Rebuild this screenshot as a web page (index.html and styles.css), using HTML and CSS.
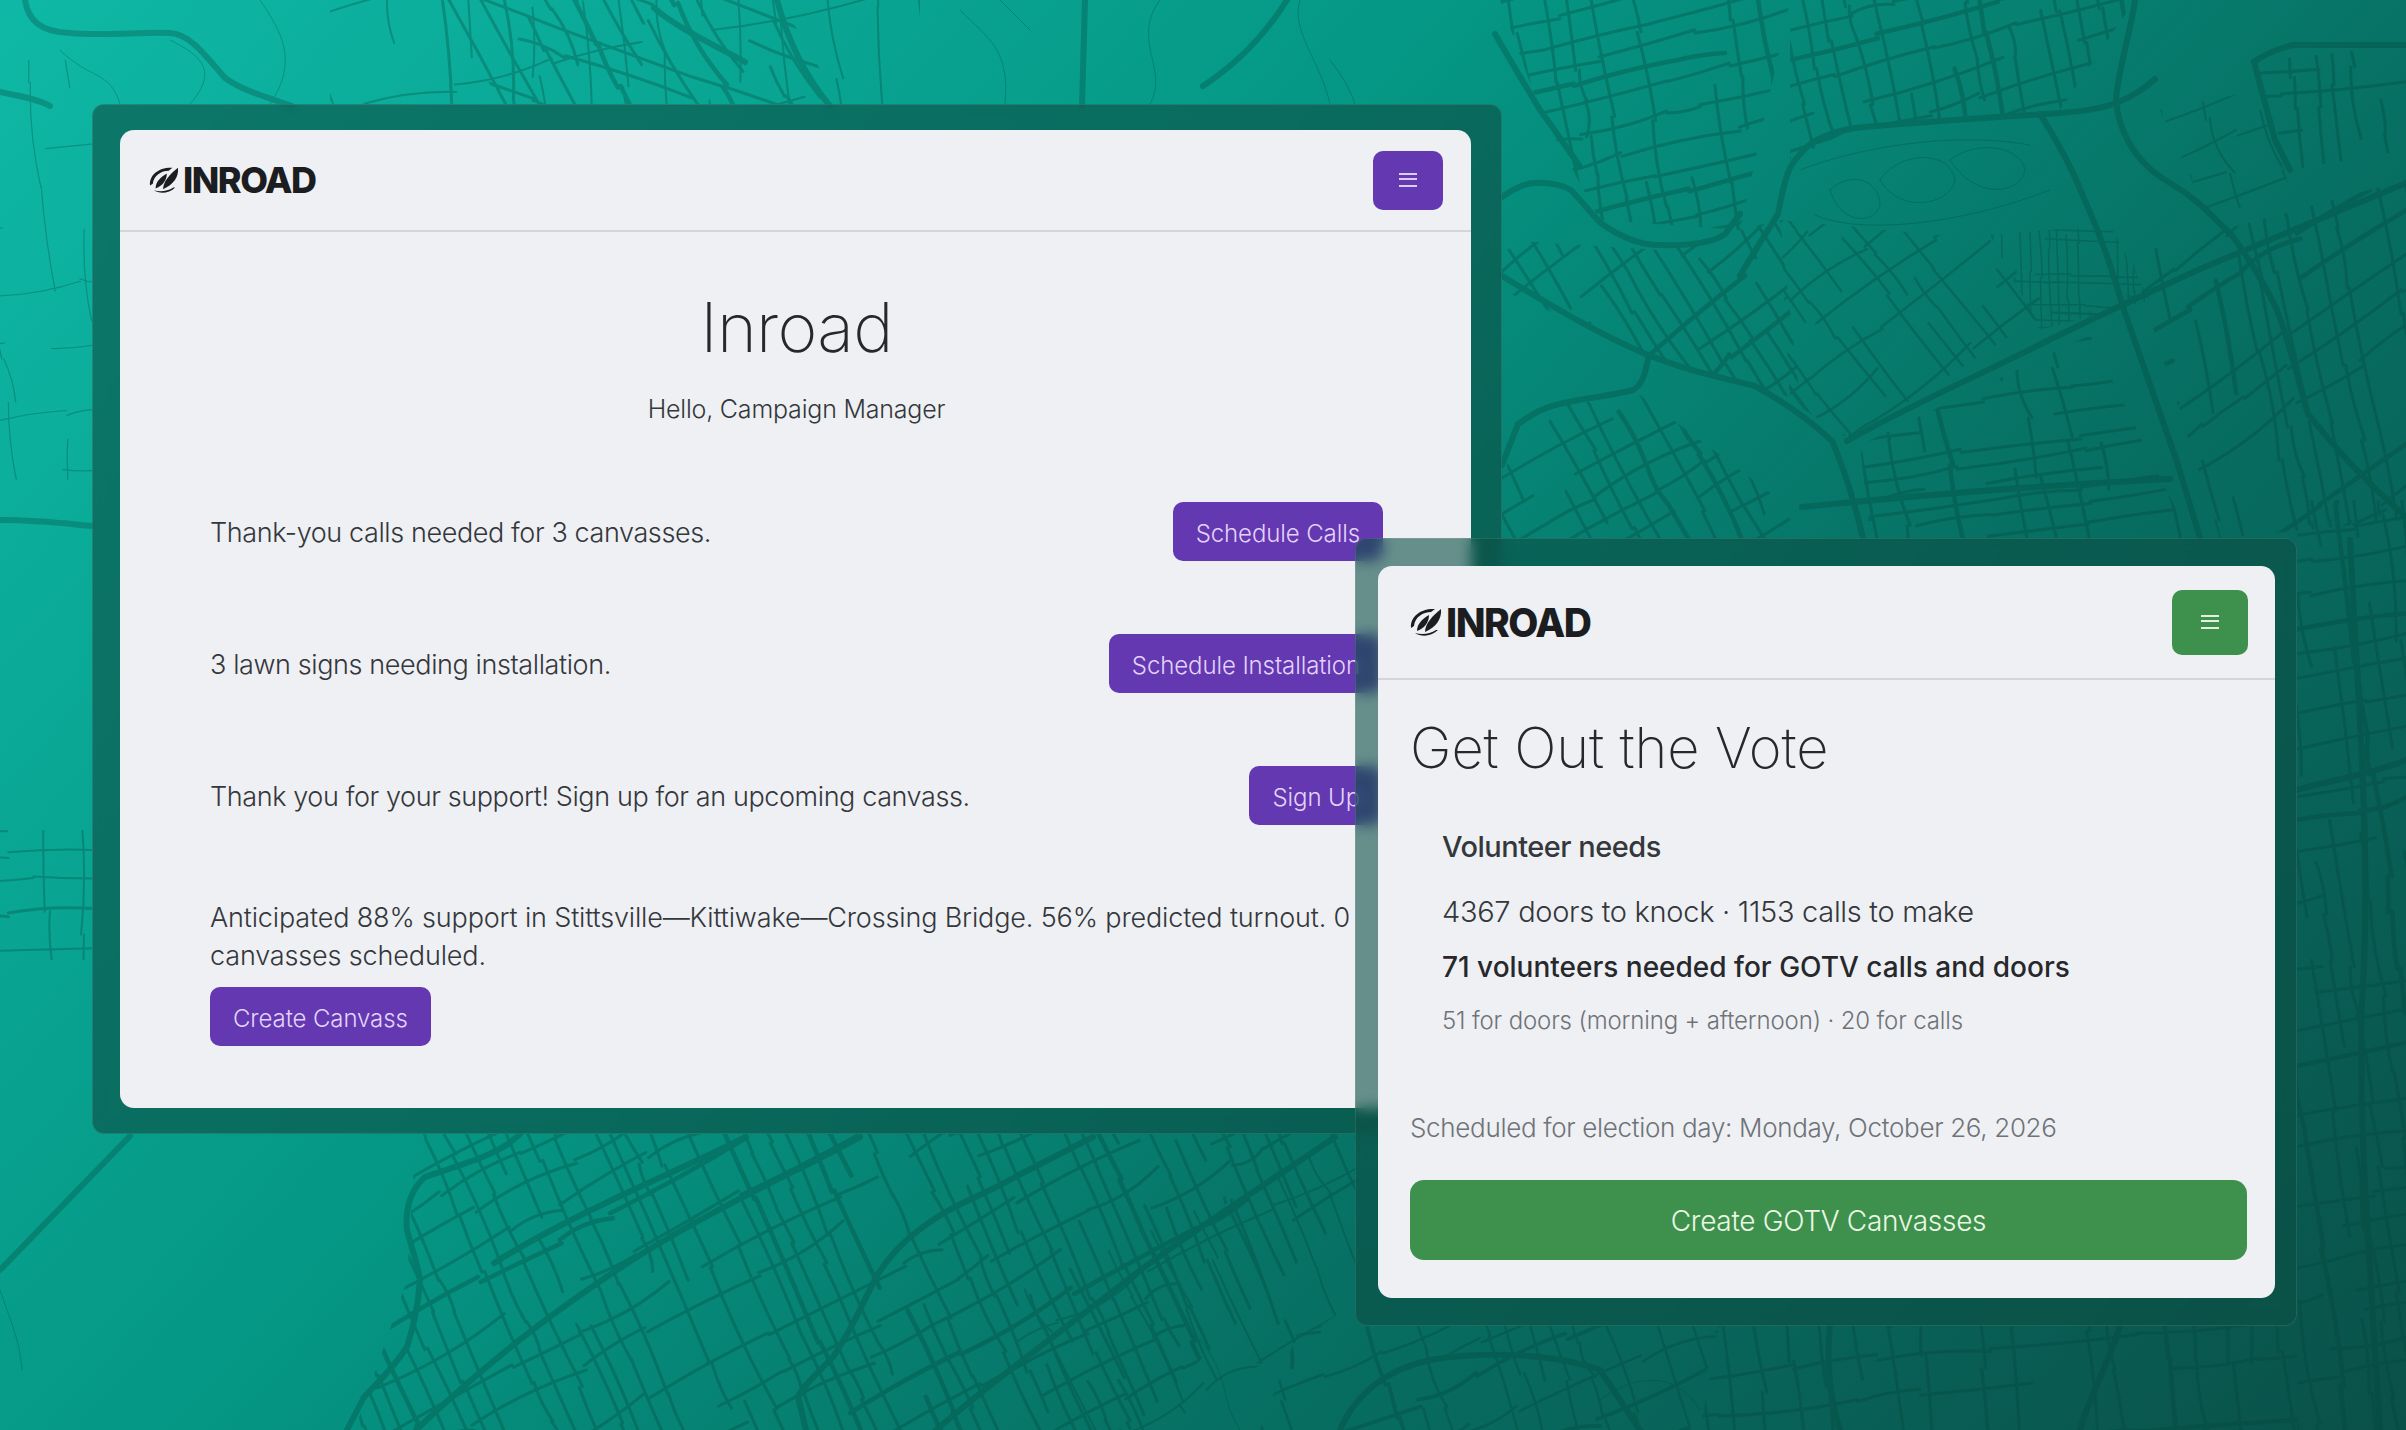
FILE: index.html
```html
<!DOCTYPE html>
<html lang="en">

<head>
    <meta charset="UTF-8">
    <title>Inroad</title>
    <link rel="stylesheet" href="styles.css">
</head>

<body>
    <svg id="map" class="map" viewBox="0 0 2406 1430" xmlns="http://www.w3.org/2000/svg"></svg>

    <div class="frame frame-main">
        <div class="card">
            <div class="navbar">
                <div class="brand">
                    <svg class="brand-mark" viewBox="0 0 32 30">
                        <path d="M1 21C0 10 10 2 23 2L25 2L21 5C13 5 5 10 4 19Z"/>
                        <path d="M7 24C7 17 12 12 19 8C19 15 15 21 7 24Z"/>
                        <path d="M15 25C15 17 22 9 31 2C32 12 26 20 15 25Z"/>
                        <path d="M5 26C11 30 21 30 28 23L26 23C20 27 12 28 5 26Z"/>
                    </svg>
                    <span>INROAD</span>
                </div>
                <button class="menu-btn purple"><span class="burger"></span></button>
            </div>
            <div class="main-body">
                <h1 class="main-title">Inroad</h1>
                <p class="hello">Hello, Campaign Manager</p>
                <div class="row row-first">
                    <span>Thank-you calls needed for 3 canvasses.</span>
                    <button class="btn purple">Schedule Calls</button>
                </div>
                <div class="row">
                    <span>3 lawn signs needing installation.</span>
                    <button class="btn purple">Schedule Installation</button>
                </div>
                <div class="row">
                    <span>Thank you for your support! Sign up for an upcoming canvass.</span>
                    <button class="btn purple">Sign Up</button>
                </div>
                <p class="support">Anticipated 88% support in Stittsville—Kittiwake—Crossing Bridge. 56% predicted turnout. 0 canvasses scheduled.</p>
                <button class="btn purple">Create Canvass</button>
            </div>
        </div>
    </div>

    <div class="frame frame-gotv">
        <div class="card">
            <div class="navbar navbar-gotv">
                <div class="brand brand-gotv">
                    <svg class="brand-mark" viewBox="0 0 32 30">
                        <path d="M1 21C0 10 10 2 23 2L25 2L21 5C13 5 5 10 4 19Z"/>
                        <path d="M7 24C7 17 12 12 19 8C19 15 15 21 7 24Z"/>
                        <path d="M15 25C15 17 22 9 31 2C32 12 26 20 15 25Z"/>
                        <path d="M5 26C11 30 21 30 28 23L26 23C20 27 12 28 5 26Z"/>
                    </svg>
                    <span>INROAD</span>
                </div>
                <button class="menu-btn menu-btn-gotv green"><span class="burger"></span></button>
            </div>
            <div class="gotv-body">
                <h2 class="gotv-title">Get Out the Vote</h2>
                <div class="needs">
                    <p class="needs-head">Volunteer needs</p>
                    <p class="needs-counts">4367 doors to knock · 1153 calls to make</p>
                    <p class="needs-total">71 volunteers needed for GOTV calls and doors</p>
                    <p class="needs-split">51 for doors (morning + afternoon) · 20 for calls</p>
                </div>
                <p class="scheduled">Scheduled for election day: Monday, October 26, 2026</p>
                <button class="btn-wide green">Create GOTV Canvasses</button>
            </div>
        </div>
    </div>

    <script src="map.js"></script>
</body>
</html>
```
FILE: styles.css
```css
body {
    margin: 0;
    width: 2406px;
    height: 1430px;
    position: relative;
    overflow: hidden;
    font-family: Inter, "Noto Sans", sans-serif;
    font-weight: 300;
    color: #34373b;
    background: linear-gradient(132deg, #0fb8a6 0%, #059684 40%, #076f63 68%, #0a5149 100%);
}

p,
h1,
h2 {
    margin: 0;
}

button {
    font-family: inherit;
    border: none;
    cursor: pointer;
}

.map {
    position: absolute;
    left: 0;
    top: 0;
    width: 2406px;
    height: 1430px;
}

/* glass frames round the two app windows */
.frame {
    position: absolute;
    box-sizing: border-box;
    border: 1px solid rgba(255, 255, 255, 0.1);
    border-radius: 12px;
    background-color: rgba(11, 78, 68, 0.6);
    -webkit-backdrop-filter: blur(7px);
    backdrop-filter: blur(7px);
}

.frame-main {
    left: 92px;
    top: 104px;
    width: 1410px;
    height: 1030px;
    padding: 25px 30px 25px 27px;
}

.frame-gotv {
    left: 1355px;
    top: 538px;
    width: 942px;
    height: 788px;
    padding: 27px 21px 27px 22px;
}

.card {
    height: 100%;
    box-sizing: border-box;
    background-color: #eef0f4;
    border-radius: 14px;
    overflow: hidden;
}

.navbar {
    height: 102px;
    box-sizing: border-box;
    border-bottom: 2px solid #d3d5d9;
    padding: 0 28px 0 29px;
    display: flex;
    align-items: center;
    justify-content: space-between;
}

.navbar-gotv {
    height: 114px;
    padding: 0 27px 0 32px;
}

.brand {
    display: flex;
    align-items: center;
    gap: 4px;
    font-weight: 800;
    font-size: 36px;
    letter-spacing: -1.5px;
    color: #1c1d20;
}

.brand-gotv {
    font-size: 39px;
}

.brand-mark {
    width: 30px;
    height: 28px;
    fill: #1c1d20;
}

.brand-gotv .brand-mark {
    width: 32px;
    height: 30px;
}

.menu-btn {
    width: 70px;
    height: 59px;
    border-radius: 10px;
    display: flex;
    align-items: center;
    justify-content: center;
}

.menu-btn-gotv {
    width: 76px;
    height: 65px;
}

.burger {
    display: block;
    width: 18px;
    height: 14px;
    box-sizing: border-box;
    border-top: 2px solid #dccdf6;
    border-bottom: 2px solid #dccdf6;
    position: relative;
}

.burger::after {
    content: "";
    position: absolute;
    left: 0;
    right: 0;
    top: 3px;
    height: 2px;
    background-color: #dccdf6;
}

.green .burger {
    border-color: #e2f0dd;
}

.green .burger::after {
    background-color: #e2f0dd;
}

.purple {
    background-color: #6338b0;
    color: #e2d3fa;
}

.green {
    background-color: #3d914c;
    color: #ecf6e6;
}

.main-body {
    padding: 0 88px 0 90px;
}

.main-title {
    margin-top: 57px;
    text-align: center;
    font-size: 68px;
    line-height: 76px;
    font-weight: 250;
    letter-spacing: -0.7px;
    color: #26282c;
}

.hello {
    margin-top: 27px;
    text-align: center;
    font-size: 25px;
    line-height: 34px;
    letter-spacing: -0.2px;
}

.row {
    display: flex;
    align-items: center;
    justify-content: space-between;
    margin-top: 73px;
    font-size: 27px;
    letter-spacing: -0.4px;
}

.row span {
    padding-top: 2px;
}

.row-first {
    margin-top: 76px;
}

.btn {
    height: 59px;
    padding: 3px 23px 0;
    border-radius: 10px;
    font-size: 24px;
    font-weight: 300;
    letter-spacing: -0.1px;
    white-space: nowrap;
}

.support {
    margin-top: 74px;
    margin-bottom: 12px;
    font-size: 27px;
    line-height: 38px;
    letter-spacing: -0.15px;
}

.gotv-body {
    padding: 0 28px 0 32px;
}

.gotv-title {
    margin-top: 35px;
    font-size: 56px;
    line-height: 66px;
    font-weight: 250;
    letter-spacing: -0.1px;
    color: #26282c;
}

.needs {
    margin-top: 47px;
    padding-left: 32px;
}

.needs-head {
    font-size: 29px;
    line-height: 38px;
    font-weight: 500;
    letter-spacing: -0.5px;
}

.needs-counts {
    margin-top: 27px;
    font-size: 29px;
    line-height: 38px;
    letter-spacing: -0.3px;
}

.needs-total {
    margin-top: 17px;
    font-size: 28px;
    line-height: 38px;
    font-weight: 500;
    color: #26282c;
}

.needs-split {
    margin-top: 16px;
    font-size: 24px;
    line-height: 38px;
    letter-spacing: -0.15px;
    color: #6f7378;
}

.scheduled {
    margin-top: 69px;
    font-size: 26px;
    line-height: 38px;
    letter-spacing: -0.32px;
    color: #6f7378;
}

.btn-wide {
    display: block;
    width: 100%;
    height: 80px;
    margin-top: 33px;
    padding-top: 2px;
    border-radius: 14px;
    font-size: 28px;
    font-weight: 300;
    letter-spacing: -0.3px;
}
```
FILE: map.js
```js
// street map behind the windows: traced main roads plus generated blocks
var SVG_NS = 'http://www.w3.org/2000/svg';
var map = document.getElementById('map');
var seed = 211;

function rand() {
    seed = (seed * 1664525 + 1013904223) % 4294967296;
    return seed / 4294967296;
}

function addPath(parent, d, width) {
    var p = document.createElementNS(SVG_NS, 'path');
    p.setAttribute('d', d);
    p.setAttribute('stroke-width', width);
    parent.appendChild(p);
}

// poly, angle of long streets, spacing, angle of cross streets, spacing, width
var districts = [
    [[[330,0],[920,0],[920,104],[330,104]], 84, 40, -12, 40, 2],
    [[[446,0],[780,0],[840,104],[500,104]], 62, 28, 20, 24, 3],
    [[[1500,0],[1790,0],[1740,230],[1600,220],[1540,110]], 80, 24, -14, 26, 3],
    [[[1790,0],[2135,0],[2060,110],[1855,128],[1790,160]], 78, 20, -16, 26, 3],
    [[[1502,240],[1660,250],[1780,220],[1800,400],[1660,360],[1502,290]], 58, 18, -38, 34, 3],
    [[[1780,220],[1990,240],[2050,310],[1850,440],[1790,400]], 52, 16, -36, 32, 2.5],
    [[[1990,235],[2110,225],[2150,300],[2040,330]], 88, 9, 2, 9, 1.5],
    [[[1860,445],[2090,335],[2190,538],[1870,538]], 78, 28, -8, 20, 3],
    [[[2130,255],[2406,180],[2406,520],[2220,538]], 78, 22, -34, 34, 3],
    [[[2254,62],[2406,45],[2406,150],[2290,170]], 84, 22, -6, 28, 3],
    [[[2160,110],[2260,90],[2290,190],[2210,220]], 70, 40, -20, 36, 2],
    [[[1502,470],[1564,405],[1640,395],[1780,500],[1800,538],[1502,538]], 62, 22, -30, 32, 3],
    [[[2297,500],[2406,500],[2406,1430],[2297,1430]], 82, 24, -10, 28, 3],
    [[[416,1134],[1360,1134],[1360,1200],[1130,1430],[355,1430],[407,1280]], 66, 18, -28, 36, 3],
    [[[1000,1300],[1360,1134],[1360,1300],[1160,1430],[1050,1430]], 66, 40, -28, 60, 2],
    [[[1300,1326],[1720,1326],[1690,1430],[1260,1430]], 72, 26, -22, 38, 2.5],
    [[[1720,1326],[2297,1326],[2297,1430],[1700,1430]], 84, 30, -6, 30, 3],
    [[[0,60],[92,60],[92,480],[0,480]], 84, 38, -8, 60, 1.2],
    [[[0,830],[92,830],[92,960],[0,960]], 88, 30, -2, 34, 2]
];

// traced arterial roads
var mainRoads = [
    'M25 0C28 20 40 32 70 33C100 36 140 32 170 33C190 34 205 55 225 78C245 92 270 98 292 106',
    'M777 0C785 30 800 70 830 106',
    'M654 8C680 30 715 45 745 62',
    'M1085 0L1082 106',
    'M0 92C20 96 40 100 50 106',
    'M0 520C40 520 70 524 92 526',
    'M130 1136L0 1270',
    'M520 1134C500 1155 460 1165 425 1177C410 1190 405 1210 407 1230C412 1250 418 1265 420 1280C418 1310 412 1330 407 1347C392 1370 375 1385 364 1397L347 1430',
    'M876 1277C890 1255 905 1240 919 1230C950 1205 985 1195 1015 1177L1093 1137M876 1277C860 1310 848 1335 833 1357C815 1375 800 1390 798 1397L806 1430',
    'M936 1430C1000 1375 1070 1325 1127 1280C1200 1225 1280 1175 1335 1137',
    'M494 1263C570 1215 670 1175 746 1137',
    'M416 1430C500 1350 570 1300 640 1255C720 1205 800 1170 860 1137',
    'M2135 0C2130 35 2118 70 2116 100C2118 125 2130 160 2170 183C2200 200 2215 220 2231 234C2250 260 2265 285 2277 310C2295 360 2300 390 2308 414C2340 455 2375 490 2406 517',
    'M2040 114C2060 145 2075 175 2086 203C2105 245 2115 280 2124 310C2145 370 2162 420 2178 465L2200 538',
    'M1855 128C1920 122 1985 118 2047 114C2075 112 2098 110 2116 103C2130 98 2145 88 2155 79M1855 128C1830 132 1812 140 1802 152C1792 162 1788 170 1786 179C1781 195 1780 205 1778 214C1765 235 1752 255 1740 276',
    'M1502 276C1550 305 1600 335 1648 355C1690 372 1725 378 1755 386C1790 405 1815 425 1832 441C1845 470 1855 505 1863 538',
    'M1847 441C1910 405 1980 375 2047 341C2100 315 2150 292 2200 269C2270 240 2340 210 2406 183',
    'M1802 507C1920 495 2050 485 2170 479',
    'M1648 359C1645 375 1642 385 1633 390C1610 396 1585 398 1564 403C1540 408 1530 416 1518 424L1502 465',
    'M1502 197C1512 190 1522 184 1533 183C1550 182 1562 185 1571 190C1585 205 1592 215 1602 224C1625 240 1645 246 1663 245C1690 246 1715 242 1725 234L1740 214',
    'M1287 0C1265 35 1235 65 1203 86',
    'M1495 34C1510 60 1525 85 1540 110C1555 130 1568 150 1579 165',
    'M2254 62C2268 52 2280 48 2293 45L2406 45',
    'M2254 62L2275 140L2290 170',
    'M2406 760C2370 775 2330 780 2297 790',
    'M2350 540C2358 700 2372 860 2362 1000C2358 1140 2372 1290 2380 1430',
    'M1340 1430C1355 1395 1385 1370 1430 1360C1480 1352 1550 1352 1600 1370L1640 1430',
    'M1830 1326C1826 1362 1830 1400 1840 1430',
    'M2120 1326C2110 1360 2090 1395 2080 1430'
];

// thin contour-like lines in the open parts of the map
var thinRoads = [
    'M60 50C90 80 110 70 120 104M260 0C280 30 300 60 270 104M170 40C200 55 220 70 190 104',
    'M960 10C990 40 1010 50 1005 104M1160 0C1130 40 1170 70 1150 104M1000 0L1030 30',
    'M1300 0C1290 30 1320 60 1330 104M1330 60C1345 80 1350 90 1355 104',
    'M1600 1400C1640 1370 1680 1375 1700 1410M1200 1340C1230 1375 1220 1400 1240 1430',
    'M0 1290C10 1320 20 1340 22 1370',
    'M1830 190C1850 170 1880 180 1880 205C1875 225 1840 225 1830 190Z',
    'M1880 180C1900 150 1950 150 1955 180C1950 205 1900 215 1880 180Z',
    'M1950 160C1975 140 2020 145 2025 170C2020 195 1975 200 1950 160Z',
    'M1815 215C1860 235 1960 225 2050 190M1800 170C1850 150 1950 130 2030 145'
];

var groupMain = document.createElementNS(SVG_NS, 'g');
groupMain.setAttribute('fill', 'none');
groupMain.setAttribute('stroke', '#04453b');
groupMain.setAttribute('stroke-linecap', 'round');
groupMain.setAttribute('stroke-linejoin', 'round');
groupMain.setAttribute('opacity', '0.3');
map.appendChild(groupMain);

var defs = document.createElementNS(SVG_NS, 'defs');
map.appendChild(defs);

function addStreets(parent, cx, cy, reach, angle, spacing, width) {
    var a = angle * Math.PI / 180;
    var ux = Math.cos(a), uy = Math.sin(a);
    var nx = -uy, ny = ux;
    for (var off = -reach; off < reach; off += spacing * (0.7 + rand() * 0.6)) {
        if (rand() < 0.1) continue;
        var t = -reach;
        var d = '';
        // each street is broken into short runs, some of them missing, with a slight bend
        while (t < reach) {
            var len = 30 + rand() * 130;
            var end = t + len;
            if (rand() > 0.2) {
                var wob = (rand() - 0.5) * spacing * 0.4;
                var bend = (rand() - 0.5) * spacing * 0.5;
                var mid = (t + end) / 2;
                var x1 = cx + ux * t + nx * off;
                var y1 = cy + uy * t + ny * off;
                var qx = cx + ux * mid + nx * (off + bend);
                var qy = cy + uy * mid + ny * (off + bend);
                var x2 = cx + ux * end + nx * (off + wob);
                var y2 = cy + uy * end + ny * (off + wob);
                d += 'M' + x1.toFixed(1) + ' ' + y1.toFixed(1) + 'Q' + qx.toFixed(1) + ' ' + qy.toFixed(1) + ' ' + x2.toFixed(1) + ' ' + y2.toFixed(1);
            }
            t = end;
        }
        if (d) {
            addPath(parent, d, rand() < 0.12 ? width * 1.5 : width);
        }
    }
}

districts.forEach(function (item, i) {
    var pts = item[0];
    var clip = document.createElementNS(SVG_NS, 'clipPath');
    clip.setAttribute('id', 'district' + i);
    var poly = document.createElementNS(SVG_NS, 'polygon');
    poly.setAttribute('points', pts.map(function (p) { return p.join(','); }).join(' '));
    clip.appendChild(poly);
    defs.appendChild(clip);

    var xs = pts.map(function (p) { return p[0]; });
    var ys = pts.map(function (p) { return p[1]; });
    var minX = Math.min.apply(null, xs), maxX = Math.max.apply(null, xs);
    var minY = Math.min.apply(null, ys), maxY = Math.max.apply(null, ys);
    var reach = Math.max(maxX - minX, maxY - minY);

    var g = document.createElementNS(SVG_NS, 'g');
    g.setAttribute('clip-path', 'url(#district' + i + ')');
    groupMain.appendChild(g);
    addStreets(g, (minX + maxX) / 2, (minY + maxY) / 2, reach, item[1], item[2], item[5]);
    addStreets(g, (minX + maxX) / 2, (minY + maxY) / 2, reach, item[3], item[4], item[5]);
});

mainRoads.forEach(function (d) {
    addPath(groupMain, d, 6);
});

thinRoads.forEach(function (d) {
    addPath(groupMain, d, 1);
});
```
